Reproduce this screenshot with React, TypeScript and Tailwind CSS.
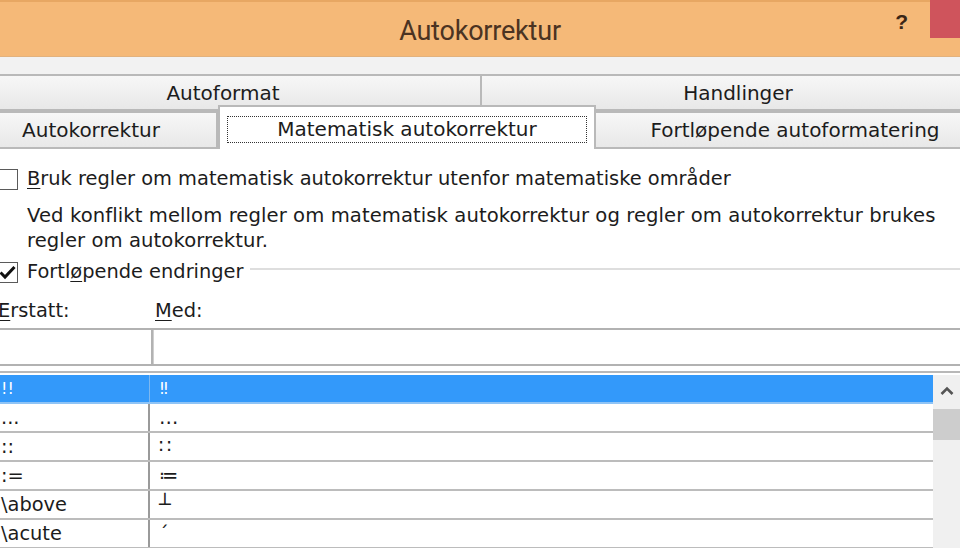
import React from 'react';

// Gjenskaping av Word-dialogen «Autokorrektur», fanen «Matematisk autokorrektur»
const rows: { from: string; to: string }[] = [
  { from: '!!', to: '‼' },
  { from: '...', to: '…' },
  { from: '::', to: '∷' },
  { from: ':=', to: '≔' },
  { from: '\\above', to: '┴' },
  { from: '\\acute', to: '´' },
];

const Tab: React.FC<{ label: string; className?: string }> = ({ label, className = '' }) => (
  <div
    className={`flex items-center justify-center border-2 border-b-0 border-[#b9b9b9] bg-gradient-to-b from-[#f7f7f7] to-[#e8e8e8] ${className}`}
  >
    {label}
  </div>
);

export default function App() {
  return (
    <div className="w-[960px] h-[548px] overflow-hidden bg-white text-[#1c1c1c] font-['DejaVu_Sans',sans-serif] text-[19.4px] leading-none">
      {/* tittellinje */}
      <div className="h-[57px] bg-[#f5b978] border-t-2 border-[#e7a763] border-b border-b-[#e2b27e] grid grid-cols-[1fr_auto_1fr]">
        <div />
        <div className="flex items-center pt-[4px] font-['Roboto',sans-serif] text-[27px] text-[#4b3322] tracking-[-0.2px]">
          Autokorrektur
        </div>
        <div className="flex justify-end items-start">
          <span className="mt-[9px] mr-[22px] font-['Liberation_Sans',sans-serif] font-bold text-[21px] text-[#3a2616]">?</span>
          <div className="w-[30px] h-[38px] -mt-[2px] bg-[#cf545c]" />
        </div>
      </div>

      {/* faner – dialogen er beskåret ca. 36px på hver side */}
      <div className="bg-[#f2f2f2] pt-[17px] text-[20px]">
        <div className="flex h-[35px] -mx-[36px]">
          <Tab label="Autoformat" className="w-[518px]" />
          <Tab label="Handlinger" className="flex-1 border-l-0" />
        </div>
        <div className="flex items-end h-[38px] -mx-[36px] border-t-2 border-[#b9b9b9]">
          <Tab label="Autokorrektur" className="w-[254px] h-full" />
          <div className="relative z-10 w-[378px] h-[44px] -mb-[2px] bg-white border-2 border-b-0 border-[#b9b9b9] flex items-center justify-center pt-[2px]">
            <div className="w-[360px] h-[27px] border border-dotted border-[#333] flex items-center justify-center">
              Matematisk autokorrektur
            </div>
          </div>
          <Tab label="Fortløpende autoformatering" className="flex-1 h-full border-l-0" />
        </div>
      </div>

      {/* innhold */}
      <div className="border-t-2 border-[#b9b9b9] bg-white pt-[19px]">
        <div className="flex items-center h-[22px] -ml-[3px]">
          <span className="w-[21px] h-[21px] border-[1.5px] border-[#5a5a5a] bg-white shrink-0" />
          <span className="ml-[9px]">
            <span className="underline underline-offset-[3px]">B</span>ruk regler om matematisk autokorrektur utenfor matematiske områder
          </span>
        </div>
        <p className="ml-[27px] mt-[13px] leading-[25px] text-[19.6px] tracking-[0.08px]">
          Ved konflikt mellom regler om matematisk autokorrektur og regler om autokorrektur brukes
          <br />
          regler om autokorrektur.
        </p>
        <div className="flex items-center h-[22px] mt-[8px] -ml-[3px]">
          <span className="w-[21px] h-[21px] border-[1.5px] border-[#5a5a5a] bg-white shrink-0 flex items-center justify-center">
            <svg width="17" height="15" viewBox="0 0 17 15">
              <path d="M1.5 7.5 L6 12 L15.5 2" fill="none" stroke="#111" strokeWidth="3" />
            </svg>
          </span>
          <span className="ml-[9px]">
            Fortl<span className="underline underline-offset-[3px]">ø</span>pende endringer
          </span>
          <div className="flex-1 ml-[6px] mt-[-6px] h-[2px] bg-[#dedede]" />
        </div>

        <div className="flex mt-[18px] h-[20px] items-center">
          <span className="w-[154px] -ml-[2px]">
            <span className="underline underline-offset-[3px]">E</span>rstatt:
          </span>
          <span className="ml-[3px]">
            <span className="underline underline-offset-[3px]">M</span>ed:
          </span>
        </div>

        <div className="flex mt-[7px] h-[38px] border-y-2 border-[#b2b2b2]">
          <div className="w-[153px] border-r-2 border-[#b2b2b2]" />
          <div className="flex-1 border-l border-[#cfcfcf]" />
        </div>

        {/* liste */}
        <div className="mt-[5px] border-t-2 border-[#b8b8b8] pt-[2px] flex">
          <div className="w-[933px]">
            {rows.map((r, i) =>
              i === 0 ? (
                <div key={i} className="flex h-[29px] bg-[#3399fa] text-white border-b-2 border-[#8fc4f6]">
                  <div className="w-[150px] flex items-center pl-[1px] border-r border-[#7db8f0] text-[16px]">
                    {r.from}
                  </div>
                  <div className="flex-1 flex items-center pl-[10px] text-[16px]">{r.to}</div>
                </div>
              ) : (
                <div key={i} className="flex h-[29px] border-b-2 border-[#bcbcbc]">
                  <div className="w-[150px] flex items-center pl-[1px] border-r-2 border-[#9a9a9a]">{r.from}</div>
                  <div className="flex-1 flex items-center pl-[9px]">{r.to}</div>
                </div>
              )
            )}
          </div>
          <div className="flex-1 bg-[#f0f0f0] flex flex-col">
            <div className="h-[32px] flex items-center justify-center">
              <svg width="14" height="10" viewBox="0 0 14 10">
                <path d="M1.5 8 L7 2.5 L12.5 8" fill="none" stroke="#555" strokeWidth="2.6" />
              </svg>
            </div>
            <div className="h-[31px] mt-[2px] bg-[#cdcdcd]" />
          </div>
        </div>
      </div>
    </div>
  );
}
